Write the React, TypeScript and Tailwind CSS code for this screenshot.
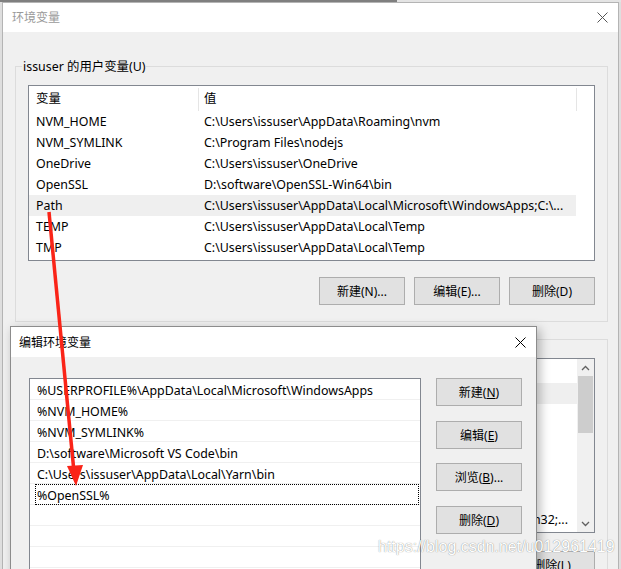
import React from "react";

function XIcon({ color = "#000" }: { color?: string }) {
  return (
    <svg width="11" height="11" viewBox="0 0 11 11">
      <path d="M0.5 0.5 L10.5 10.5 M10.5 0.5 L0.5 10.5" stroke={color} strokeWidth="1" fill="none" />
    </svg>
  );
}

function Btn({ children, className = "" }: { children: React.ReactNode; className?: string }) {
  return (
    <div
      className={
        "w-[86px] h-[28px] border border-[#adadad] bg-[#e1e1e1] flex items-center justify-center pt-[1px] text-[12px] text-black shrink-0 " +
        className
      }
    >
      {children}
    </div>
  );
}

const userVars: [string, string][] = [
  ["NVM_HOME", "C:\\Users\\issuser\\AppData\\Roaming\\nvm"],
  ["NVM_SYMLINK", "C:\\Program Files\\nodejs"],
  ["OneDrive", "C:\\Users\\issuser\\OneDrive"],
  ["OpenSSL", "D:\\software\\OpenSSL-Win64\\bin"],
  ["Path", "C:\\Users\\issuser\\AppData\\Local\\Microsoft\\WindowsApps;C:\\..."],
  ["TEMP", "C:\\Users\\issuser\\AppData\\Local\\Temp"],
  ["TMP", "C:\\Users\\issuser\\AppData\\Local\\Temp"],
];

const sysVars: [string, string][] = [
  ["ComSpec", "C:\\WINDOWS\\system32\\cmd.exe"],
  ["DriverData", "C:\\Windows\\System32\\Drivers\\DriverData"],
  ["NUMBER_OF_PROCESSORS", "8"],
  ["OS", "Windows_NT"],
  ["PATHEXT", ".COM;.EXE;.BAT"],
  ["PROCESSOR_ARCHITECTURE", "AMD64"],
  ["Path", "C:\\WINDOWS\\system32;C:\\WINDOWS;C:\\Windows\\System32\\Wbem;C:\\win32;..."],
];

const pathItems = [
  "%USERPROFILE%\\AppData\\Local\\Microsoft\\WindowsApps",
  "%NVM_HOME%",
  "%NVM_SYMLINK%",
  "D:\\software\\Microsoft VS Code\\bin",
  "C:\\Users\\issuser\\AppData\\Local\\Yarn\\bin",
  "%OpenSSL%",
  "",
  "",
  "",
];

export default function App() {
  return (
    <div className="relative w-[621px] h-[569px] overflow-hidden bg-[#dedede] text-[12.4px] text-black font-['Noto_Sans','Noto_Sans_CJK_SC',sans-serif] leading-none">
      {/* top strip of background window */}
      <div className="flex h-[2px]">
        <div className="w-[397px] bg-[#7f7f7f]" />
        <div className="flex-1 bg-[#e4e4e4]" />
      </div>

      {/* main window: 环境变量 */}
      <div className="ml-[2px] w-[617px] h-[620px] border border-[#b4b4b4] bg-[#f0f0f0]">
        <div className="h-[29px] bg-white flex items-center justify-between pl-[9px] pr-[10px]">
          <span className="text-[#9a9a9a] text-[12px]">环境变量</span>
          <XIcon color="#555" />
        </div>

        <div className="pl-[12px] pt-[26px]">
          {/* user variables group */}
          <fieldset className="w-[592px] border border-[#dcdcdc] px-[12px] pb-[16px]">
            <legend className="-ml-[6px] px-[1px] leading-[17px]">issuser 的用户变量(U)</legend>
            <div className="mt-[10px] w-[567px] h-[176px] border border-[#828790] bg-white">
              <div className="flex h-[25px]">
                <div className="w-[169px] pl-[7px] pt-[2px] flex items-center">变量</div>
                <div className="w-px bg-[#e5e5e5] mt-[2px]" />
                <div className="w-[377px] pl-[5px] pt-[2px] flex items-center">值</div>
                <div className="w-px bg-[#e5e5e5] mt-[2px]" />
              </div>
              {userVars.map(([k, v]) => (
                <div
                  key={k}
                  className={"flex h-[21px] items-center pt-[2px] w-[547px] " + (k === "Path" ? "bg-[#efefef]" : "")}
                >
                  <div className="w-[170px] pl-[7px] whitespace-nowrap">{k}</div>
                  <div className="pl-[5px] whitespace-nowrap">{v}</div>
                </div>
              ))}
            </div>
            <div className="flex justify-end gap-[9px] mt-[16px]">
              <Btn>新建(N)...</Btn>
              <Btn>编辑(E)...</Btn>
              <Btn>删除(D)</Btn>
            </div>
          </fieldset>

          {/* system variables group */}
          <fieldset className="mt-[9px] w-[592px] border border-[#dcdcdc] px-[12px] pb-[16px]">
            <legend className="-ml-[6px] px-[1px] leading-[17px]">系统变量(S)</legend>
            <div className="mt-[10px] w-[567px] h-[175px] border border-[#828790] bg-white flex">
              <div className="w-[548px]">
                <div className="flex h-[24px]">
                  <div className="w-[169px] pl-[7px] flex items-center">变量</div>
                  <div className="w-px bg-[#e5e5e5] mt-[2px]" />
                  <div className="w-[377px] pl-[5px] flex items-center">值</div>
                </div>
                {sysVars.map(([k, v], i) => (
                  <div key={k} className={"flex h-[21px] items-center pt-[2px] " + (i === 0 ? "bg-[#efefef]" : "")}>
                    <div className="w-[170px] pl-[7px] whitespace-nowrap shrink-0">{k}</div>
                    <div
                      className={
                        "w-[369px] pl-[5px] whitespace-nowrap overflow-hidden flex " +
                        (k === "Path" ? "justify-end" : "justify-start")
                      }
                    >
                      <span className="shrink-0">{v}</span>
                    </div>
                  </div>
                ))}
              </div>
              {/* scrollbar */}
              <div className="w-[17px] bg-[#f0f0f0] flex flex-col items-center">
                <div className="h-[17px] flex items-center justify-center">
                  <svg width="9" height="6" viewBox="0 0 9 6">
                    <path d="M1 5 L4.5 1.5 L8 5" stroke="#606060" strokeWidth="1.3" fill="none" />
                  </svg>
                </div>
                <div className="w-[15px] h-[57px] bg-[#cdcdcd]" />
                <div className="flex-1" />
                <div className="h-[17px] flex items-center justify-center">
                  <svg width="9" height="6" viewBox="0 0 9 6">
                    <path d="M1 1 L4.5 4.5 L8 1" stroke="#606060" strokeWidth="1.3" fill="none" />
                  </svg>
                </div>
              </div>
            </div>
            <div className="flex justify-end gap-[9px] mt-[18px]">
              <Btn>新建(W)...</Btn>
              <Btn>编辑(I)...</Btn>
              <Btn>删除(L)</Btn>
            </div>
          </fieldset>
        </div>
      </div>

      {/* 编辑环境变量 dialog */}
      <div className="absolute left-[10px] top-[326px] w-[527px] h-[280px] border border-[#8c8c8c] bg-[#f0f0f0] shadow-[3px_3px_10px_rgba(0,0,0,0.28)]">
        <div className="h-[30px] bg-white flex items-center justify-between pl-[8px] pr-[10px]">
          <span className="text-[12px] pt-[1px]">编辑环境变量</span>
          <XIcon />
        </div>
        <div className="flex pl-[18px] pt-[21px] gap-[15px]">
          <div className="w-[392px] h-[240px] border border-[#828790] bg-white">
            {pathItems.map((p, i) =>
              i === 5 ? (
                <div key={i} className="h-[21px] border-b border-[#f0f0f0]">
                  <div className="ml-[5px] mr-[1px] h-[21px] border border-dotted border-black flex items-center pl-[1px] pt-[3px]">
                    {p}
                  </div>
                </div>
              ) : (
                <div
                  key={i}
                  className="h-[21px] border-b border-[#f0f0f0] flex items-center pl-[7px] pt-[4px] whitespace-nowrap"
                >
                  {p}
                </div>
              )
            )}
          </div>
          <div className="flex flex-col">
            <Btn>
              新建(<span className="underline">N</span>)
            </Btn>
            <Btn className="mt-[15px]">
              编辑(<span className="underline">E</span>)
            </Btn>
            <Btn className="mt-[14px]">
              浏览(<span className="underline">B</span>)...
            </Btn>
            <Btn className="mt-[15px]">
              删除(<span className="underline">D</span>)
            </Btn>
          </div>
        </div>
      </div>

      {/* red arrow annotation */}
      <svg className="absolute inset-0 pointer-events-none" width="621" height="569">
        <line x1="49" y1="212" x2="74" y2="472" stroke="#fa2418" strokeWidth="3.5" />
        <polygon points="67,466 83,465 76,486" fill="#fa2418" />
      </svg>

      {/* watermark */}
      <div className="absolute left-[378px] top-[539px] text-[16px] font-['Liberation_Sans',sans-serif] text-white [text-shadow:0_0_1px_rgba(0,0,0,0.55)] whitespace-nowrap">
        https://blog.csdn.net/u012961419
      </div>
    </div>
  );
}
